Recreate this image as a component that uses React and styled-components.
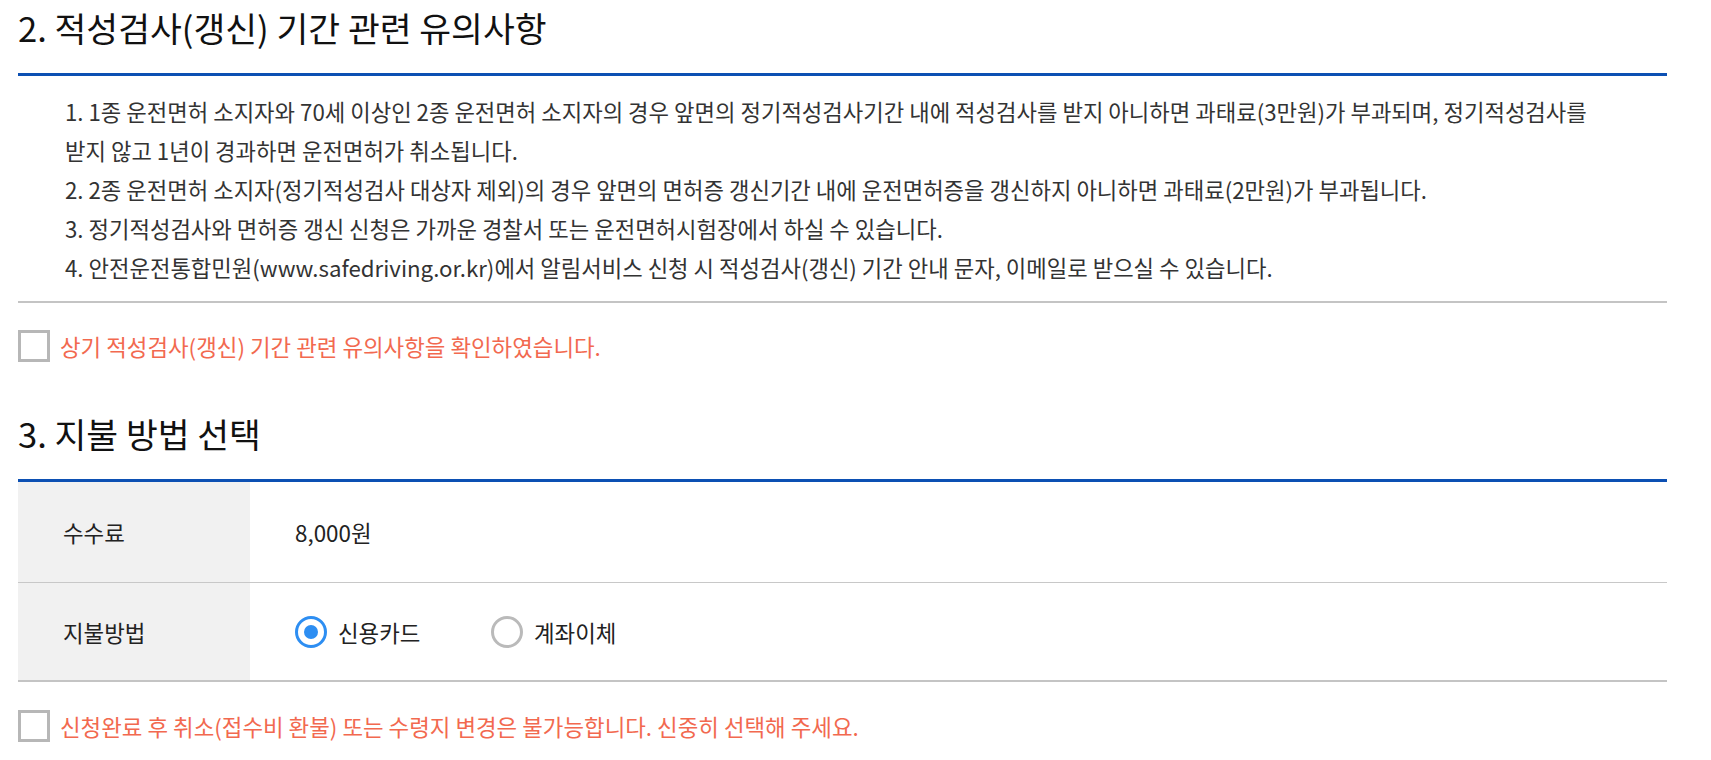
import styled, { createGlobalStyle } from 'styled-components';

const GlobalStyle = createGlobalStyle`
    body {
        margin: 0;
        background: #fff;
        font-family: "Noto Sans CJK KR", "Noto Sans", sans-serif;
        color: #222;
    }
`;

const Page = styled.div`
    width: 1649px;
    padding: 0 0 0 18px;
`;

const SectionTitle = styled.h2`
    margin: 0;
    font-size: 34.6px;
    font-weight: 400;
    line-height: 54px;
    color: #111;
    padding-bottom: 19px;
    border-bottom: 3px solid #0c50b3;
`;

const NoticeList = styled.ol`
    list-style: none;
    margin: 0;
    padding: 16px 0 14px 47px;
    border-bottom: 2px solid #c4c4c4;
    font-size: 22.25px;
    line-height: 39px;
    color: #333;
`;

const AgreeRow = styled.label`
    display: flex;
    align-items: center;
    gap: 10px;
    margin-top: ${(p) => p.$top}px;
    margin-bottom: ${(p) => p.$bottom || 0}px;
    font-size: 22.4px;
    line-height: 32px;
    color: #f2694f;
    cursor: pointer;
`;

const CheckBox = styled.span`
    width: 32px;
    height: 32px;
    box-sizing: border-box;
    border: 3px solid #b7b7b7;
    background: #fff;
    flex-shrink: 0;
`;

const Table = styled.div`
    display: grid;
    grid-template-columns: 232px 1fr;
    border-bottom: 2px solid #c4c4c4;
`;

const Label = styled.div`
    background: #f1f1f1;
    padding-left: 45px;
    height: ${(p) => p.$h}px;
    display: flex;
    align-items: center;
    font-size: 22.4px;
    color: #222;
    border-bottom: ${(p) => (p.$last ? 'none' : '1px solid #c8c8c8')};
`;

const Value = styled.div`
    padding-left: 45px;
    height: ${(p) => p.$h}px;
    display: flex;
    align-items: center;
    font-size: 22.4px;
    color: #222;
    border-bottom: ${(p) => (p.$last ? 'none' : '1px solid #c8c8c8')};
`;

const RadioOption = styled.label`
    display: flex;
    align-items: center;
    gap: 11px;
    width: 196px;
    cursor: pointer;
`;

const RadioCircle = styled.span`
    width: 32px;
    height: 32px;
    box-sizing: border-box;
    border-radius: 50%;
    border: 3px solid ${(p) => (p.$on ? '#2d8ef2' : '#bababa')};
    display: flex;
    align-items: center;
    justify-content: center;
    flex-shrink: 0;

    &::after {
        content: '';
        width: 14px;
        height: 14px;
        border-radius: 50%;
        background: ${(p) => (p.$on ? '#2d8ef2' : 'transparent')};
    }
`;

const notices = [
    '1. 1종 운전면허 소지자와 70세 이상인 2종 운전면허 소지자의 경우 앞면의 정기적성검사기간 내에 적성검사를 받지 아니하면 과태료(3만원)가 부과되며, 정기적성검사를',
    '받지 않고 1년이 경과하면 운전면허가 취소됩니다.',
    '2. 2종 운전면허 소지자(정기적성검사 대상자 제외)의 경우 앞면의 면허증 갱신기간 내에 운전면허증을 갱신하지 아니하면 과태료(2만원)가 부과됩니다.',
    '3. 정기적성검사와 면허증 갱신 신청은 가까운 경찰서 또는 운전면허시험장에서 하실 수 있습니다.',
    '4. 안전운전통합민원(www.safedriving.or.kr)에서 알림서비스 신청 시 적성검사(갱신) 기간 안내 문자, 이메일로 받으실 수 있습니다.',
];

export default function App() {
    return (
        <Page>
            <GlobalStyle />
            <SectionTitle>2. 적성검사(갱신) 기간 관련 유의사항</SectionTitle>
            <NoticeList>
                {notices.map((line, index) => (
                    <li key={index}>{line}</li>
                ))}
            </NoticeList>
            <AgreeRow $top={27} $bottom={44}>
                <CheckBox />
                상기 적성검사(갱신) 기간 관련 유의사항을 확인하였습니다.
            </AgreeRow>

            <SectionTitle>3. 지불 방법 선택</SectionTitle>
            <Table>
                <Label $h={100}>수수료</Label>
                <Value $h={100}>8,000원</Value>
                <Label $h={97} $last>지불방법</Label>
                <Value $h={97} $last>
                    <RadioOption>
                        <RadioCircle $on />
                        신용카드
                    </RadioOption>
                    <RadioOption>
                        <RadioCircle />
                        계좌이체
                    </RadioOption>
                </Value>
            </Table>
            <AgreeRow $top={28}>
                <CheckBox />
                신청완료 후 취소(접수비 환불) 또는 수령지 변경은 불가능합니다. 신중히 선택해 주세요.
            </AgreeRow>
        </Page>
    );
}
